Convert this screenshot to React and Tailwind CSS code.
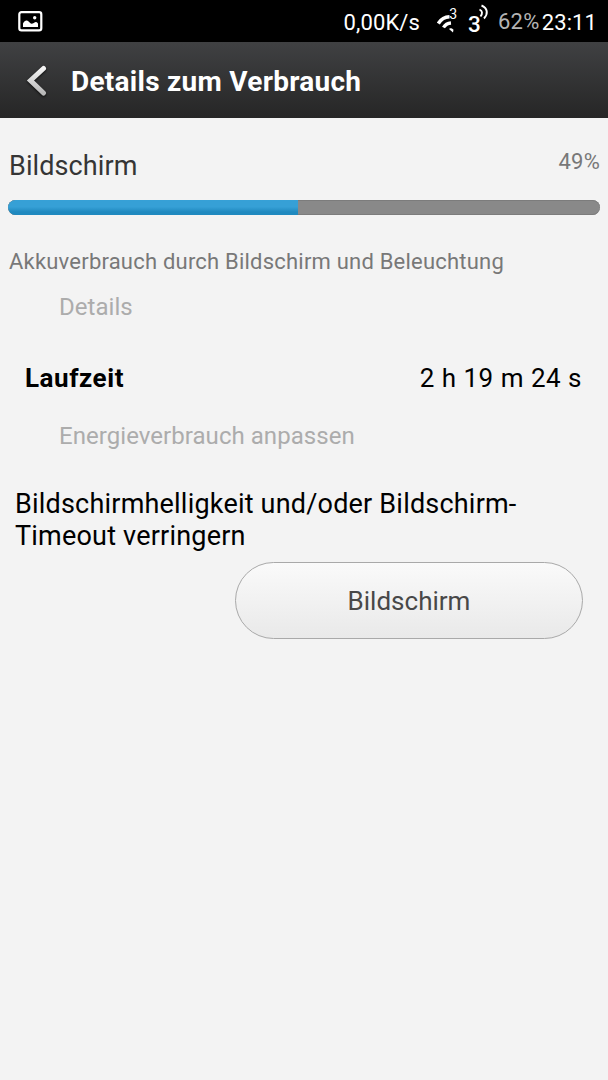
import React from 'react';

const USAGE = {
  name: 'Bildschirm',
  percent: 49,
  description: 'Akkuverbrauch durch Bildschirm und Beleuchtung',
  runtime: '2 h 19 m 24 s'
};

function PictureIcon() {
  return (
    <svg width="25" height="22" viewBox="0 0 25 22" fill="none">
      <rect x="1.3" y="1.2" width="22" height="18.2" rx="2.2" stroke="#fff" strokeWidth="2.2" />
      <path
        d="M5 16V12.500C6 10.500 7.500 9.200 9 9.500C11 10 12 12.800 13.500 12.800C15.200 12.800 16.500 11 18 11C19 11 20 12 20 13V16Z"
        fill="#fff"
      />
      <circle cx="16.700" cy="6.700" r="1.700" fill="#fff" />
    </svg>
  );
}

function WifiIcon() {
  return (
    <svg width="22" height="34" viewBox="0 -6 22 34" fill="none" stroke="#fff">
      <path d="M1.300 15.500C3.500 12 7.500 9 12.500 8.800" strokeWidth="3.600" />
      <path d="M6.500 19.500C8 17 10.500 15.300 14 15" strokeWidth="3.400" />
      <path d="M12 21C13 20 14.500 20 16.500 21.800L16 24.500Z" fill="#fff" stroke="none" />
      <text x="12.300" y="11" fontSize="14" fontFamily="Roboto, sans-serif" fill="#fff" stroke="none">3</text>
    </svg>
  );
}

function SignalIcon() {
  return (
    <svg width="22" height="36" viewBox="0 0 22 36" fill="none" stroke="#fff">
      <text x="0" y="28.500" fontSize="22.500" fontWeight="500" fontFamily="Roboto, sans-serif" fill="#fff" stroke="none">3</text>
      <path d="M11.500 6.500C14.500 8 14.800 10.500 12.500 13.500" strokeWidth="1.900" />
      <path d="M13.500 2.500C19.800 5 20.300 11 16 15.500" strokeWidth="1.900" />
    </svg>
  );
}

function StatusBar() {
  return (
    <div className="flex h-[42px] items-start justify-between bg-black pl-[18px] pr-[11px] text-white">
      <div className="pt-[11px]">
        <PictureIcon />
      </div>
      <div className="flex items-start">
        <span className="mr-[17px] pt-[10px] text-[22px] leading-[25px] tracking-[0.1px]">0,00K/s</span>
        <div className="mr-[9px] pt-[2px]">
          <WifiIcon />
        </div>
        <div className="mr-[8px] pt-[3px]">
          <SignalIcon />
        </div>
        <span className="mr-[2px] pt-[9px] text-[22px] leading-[25px] tracking-[0.3px] text-[#b4b4b4]">62%</span>
        <span className="pt-[10px] text-[22px] leading-[25px] tracking-[0.1px]">23:11</span>
      </div>
    </div>
  );
}

function TitleBar() {
  return (
    <header className="flex h-[76px] items-center bg-linear-to-b from-[#404143] to-[#262626] pl-[26px]">
      <svg width="22" height="32" viewBox="0 0 22 32" fill="none" className="drop-shadow-[0_1px_1px_rgba(0,0,0,0.8)]">
        <defs>
          <linearGradient id="chevron" x1="0" y1="0" x2="0" y2="1">
            <stop offset="0" stopColor="#f4f4f4" />
            <stop offset="1" stopColor="#b8b8b8" />
          </linearGradient>
        </defs>
        <path d="M17.500 4.500L4.500 16.500L17.500 29" stroke="url(#chevron)" strokeWidth="5" strokeLinecap="round" />
      </svg>
      <h1 className="ml-[23px] pt-[3px] text-[28px] leading-[32px] font-bold tracking-[0.27px] text-white">
        Details zum Verbrauch
      </h1>
    </header>
  );
}

function UsageBar({ percent }) {
  return (
    <div className="mt-[18px] h-[15px] overflow-hidden rounded-full bg-[#898989] shadow-[inset_0_-1px_0_#7c7c7c,inset_0_1px_0_#7c7c7c]">
      <div
        className="h-[15px] bg-linear-to-b from-[#36a0d6] from-45% to-[#1f89bf] to-80%"
        style={{ width: `${percent}%` }}
      />
    </div>
  );
}

function SectionLabel({ children, className }) {
  return (
    <h2 className={`pl-[59px] text-[24px] leading-[25px] tracking-[0.05px] text-[#acacac] ${className}`}>
      {children}
    </h2>
  );
}

function App() {
  return (
    <div className="min-h-[1080px] w-[608px] bg-[#f3f3f3] font-['Roboto',sans-serif]">
      <StatusBar />
      <TitleBar />

      <main className="pt-[32px]">
        <section className="px-[8px]">
          <div className="flex items-start justify-between">
            <span className="pt-px pl-px text-[27px] leading-[31px] tracking-[0.1px] text-[#353535]">{USAGE.name}</span>
            <span className="text-[22px] leading-[23px] tracking-[0.2px] text-[#787878]">{USAGE.percent}%</span>
          </div>
          <UsageBar percent={USAGE.percent} />
          <p className="mt-[35px] pl-px text-[22px] leading-[23px] tracking-[0.21px] text-[#787878]">
            {USAGE.description}
          </p>
        </section>

        <SectionLabel className="mt-[22px]">Details</SectionLabel>
        <div className="mt-[42px] flex justify-between pr-[26px] pl-[25px] text-[26px] leading-[32px] text-black">
          <span className="font-bold tracking-[0.55px]">Laufzeit</span>
          <span className="tracking-[0.5px]">{USAGE.runtime}</span>
        </div>

        <SectionLabel className="mt-[30px]">Energieverbrauch anpassen</SectionLabel>
        <p className="mt-[39px] pr-[60px] pl-[15px] text-[27px] leading-[32px] tracking-[0.2px] text-black">
          Bildschirmhelligkeit und/oder Bildschirm-<br />Timeout verringern
        </p>
        <div className="mt-[10px] flex justify-end pr-[25px]">
          <button className="h-[77px] w-[348px] rounded-full border border-[#a9a9a9] bg-linear-to-b from-[#fafafa] to-[#e9e9e9] pt-[2px] text-[26px] text-[#484848]">
            {USAGE.name}
          </button>
        </div>
      </main>
    </div>
  );
}

export default App;
